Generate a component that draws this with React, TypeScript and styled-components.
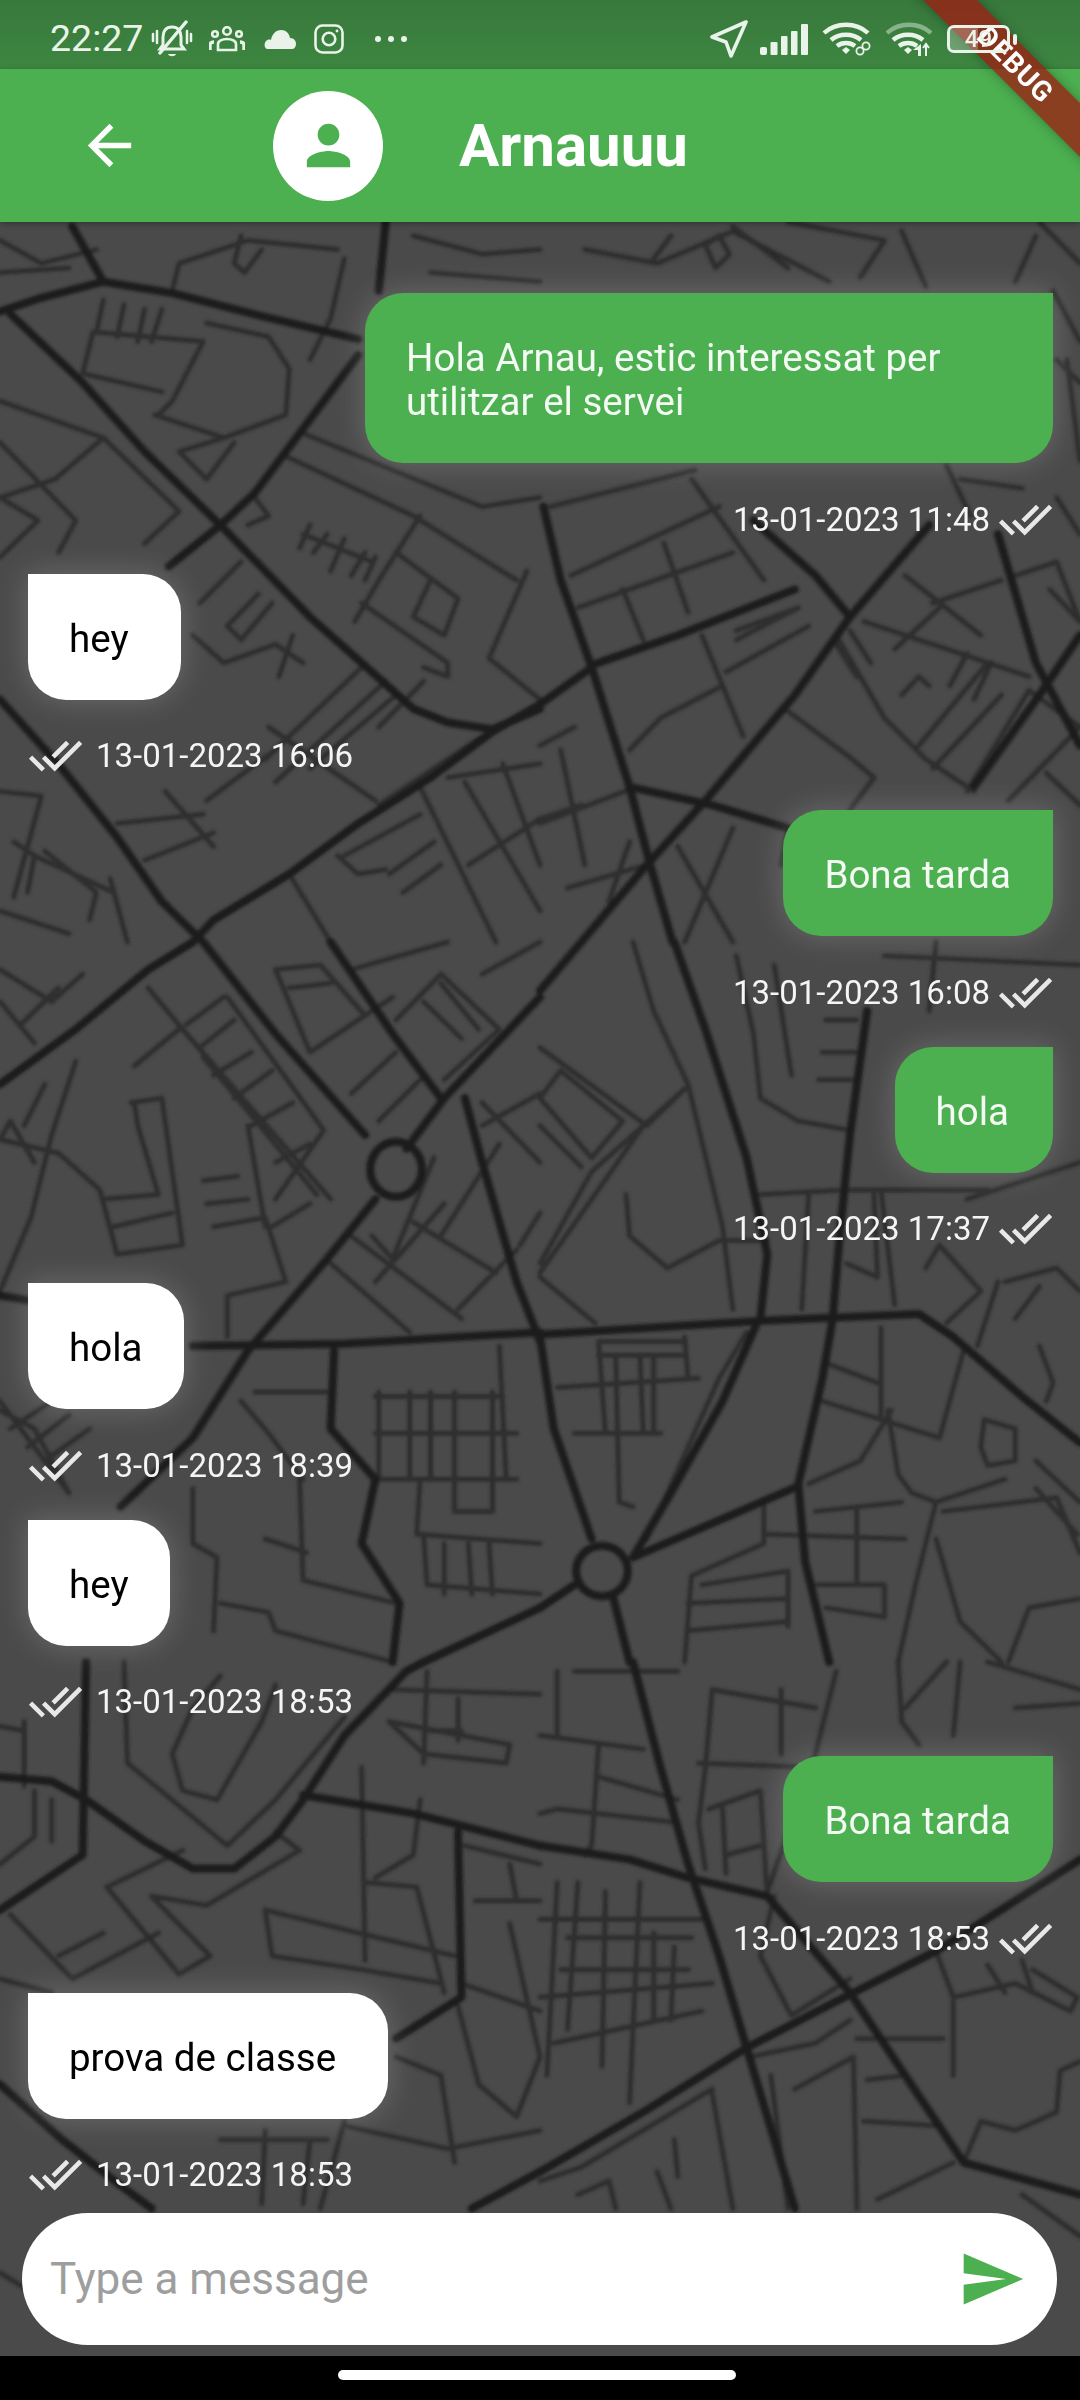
import React from 'react';
import styled, { createGlobalStyle } from 'styled-components';

const GlobalStyle = createGlobalStyle`
  html, body {
    margin: 0;
    padding: 0;
    background: #000;
  }
  * {
    box-sizing: border-box;
  }
`;

const Screen = styled.div`
  position: relative;
  width: 1080px;
  height: 2400px;
  display: flex;
  flex-direction: column;
  overflow: hidden;
  font-family: Roboto, 'Liberation Sans', sans-serif;
`;

const StatusBar = styled.div`
  height: 69px;
  flex: none;
  display: flex;
  align-items: center;
  justify-content: space-between;
  padding: 9px 63px 0 50px;
  background: linear-gradient(180deg, #38783c 0%, #3d8641 100%);
  color: #e9f3e9;
`;

const StatusGroup = styled.div`
  display: flex;
  align-items: center;
`;

const StatusTime = styled.span`
  font-size: 37.5px;
  line-height: 1;
`;

const StatusSlot = styled.span<{ $gap: number }>`
  display: flex;
  margin-left: ${p => p.$gap}px;
`;

const Battery = styled.div`
  position: relative;
  z-index: 3;
  width: 63px;
  height: 28px;
  margin-left: 15px;
  border: 3.5px solid #e9f3e9;
  border-radius: 7px;
  display: flex;
  align-items: center;
  justify-content: center;
  overflow: hidden;
`;

const BatteryFill = styled.div`
  position: absolute;
  left: 0;
  top: 0;
  bottom: 0;
  width: 49%;
  background: rgba(255, 255, 255, 0.25);
`;

const BatteryText = styled.span`
  position: relative;
  font-size: 24px;
  font-weight: 500;
  line-height: 1;
`;

const BatteryNub = styled.div`
  position: relative;
  z-index: 3;
  width: 4px;
  height: 11px;
  margin-left: 3px;
  border-radius: 2px;
  background: #e9f3e9;
`;

const DebugBanner = styled.div`
  position: absolute;
  z-index: 2;
  left: 865px;
  top: 46px;
  width: 300px;
  height: 38px;
  background: rgba(160, 25, 18, 0.75);
  box-shadow: 0 0 12px rgba(0, 0, 0, 0.3);
  transform: rotate(45deg);
  color: #fff;
  font-size: 28px;
  font-weight: 700;
  line-height: 38px;
  text-align: center;
  letter-spacing: 1px;
`;

const AppBar = styled.header`
  height: 153px;
  flex: none;
  display: flex;
  align-items: center;
  padding-left: 77px;
  background: #4caf50;
  box-shadow: 0 2px 6px rgba(0, 0, 0, 0.3);
  position: relative;
  z-index: 1;
`;

const Avatar = styled.div`
  width: 110px;
  height: 110px;
  margin-left: 131px;
  margin-right: 76px;
  border-radius: 50%;
  background: #fff;
  display: flex;
  align-items: center;
  justify-content: center;
`;

const Title = styled.h1`
  margin: 0;
  color: #fff;
  font-size: 60px;
  font-weight: 700;
  line-height: 1;
`;

const ChatArea = styled.main`
  position: relative;
  flex: 1;
  min-height: 0;
  display: flex;
  flex-direction: column;
  background: #4a4a4a;
`;

const MapLayer = styled.svg`
  position: absolute;
  inset: 0;
  width: 100%;
  height: 100%;
`;

const MessageList = styled.div`
  position: relative;
  flex: 1;
  min-height: 0;
  overflow: hidden;
  display: flex;
  flex-direction: column;
  padding: 71px 27px 0 28px;
`;

const Group = styled.div<{ $own: boolean }>`
  flex: none;
  display: flex;
  flex-direction: column;
  align-items: ${p => (p.$own ? 'flex-end' : 'flex-start')};
`;

const Bubble = styled.div<{ $own: boolean; $extra?: number }>`
  padding: 43px ${p => 41 + (p.$extra ?? 0)}px 39px 41px;
  max-width: 688px;
  font-size: 38.5px;
  line-height: 44px;
  color: ${p => (p.$own ? '#f4faf4' : '#000')};
  background: ${p => (p.$own ? '#4caf50' : '#fff')};
  border-radius: ${p => (p.$own ? '38px 0 38px 38px' : '0 38px 38px 38px')};
  box-shadow: 0 0 30px 2px rgba(255, 255, 255, 0.18);
`;

const Stamp = styled.div<{ $own: boolean }>`
  height: 110.5px;
  padding-top: 2px;
  display: flex;
  align-items: center;
  gap: ${p => (p.$own ? 8 : 13)}px;
  flex-direction: ${p => (p.$own ? 'row' : 'row-reverse')};
  color: #f5f5f5;
  font-size: 33px;
`;

const InputBar = styled.div`
  position: relative;
  flex: none;
  height: 132px;
  margin: 0 23px 11px 22px;
  padding: 0 31px 0 28px;
  border-radius: 66px;
  background: #fff;
  display: flex;
  align-items: center;
  justify-content: space-between;
`;

const Placeholder = styled.span`
  color: #9e9e9e;
  font-size: 44px;
`;

const NavBar = styled.div`
  height: 44px;
  flex: none;
  display: flex;
  justify-content: center;
  padding: 14px 6px 0 0;
  background: #000;
`;

const HomePill = styled.div`
  width: 398px;
  height: 10px;
  border-radius: 5px;
  background: #fff;
`;

const MapPath = styled.path<{ $major?: boolean }>`
  fill: none;
  stroke: ${p => (p.$major ? '#1c1c1c' : '#2d2d2d')};
  stroke-width: ${p => (p.$major ? 8 : 5)}px;
  stroke-linejoin: round;
  stroke-linecap: round;
  vector-effect: non-scaling-stroke;
`;

const MapEllipse = styled.ellipse`
  fill: none;
  stroke: #1c1c1c;
  stroke-width: 8px;
  vector-effect: non-scaling-stroke;
`;

type Tile = {
  x: number;
  y: number;
  major: string[];
  minor: string[];
  rings?: [number, number, number, number][];
};

const tiles: Tile[] = [
  {
    x: 0,
    y: 222,
    major: [
      'M0 195L120 165L300 130L500 155L760 205L1040 255',
      'M210 10L300 130',
      'M30 200L240 350L420 500L640 660L900 860L1080 980L1200 1060L1300 1090L1430 1105L1568 1060',
      'M1040 290L860 470L740 590L640 660L490 750',
      'M1568 1050L1430 1110L1250 1210L1040 1310L840 1420L620 1520L560 1568',
      'M0 1040L180 1190L340 1340L470 1480L590 1568',
      'M1120 0L1100 150',
    ],
    minor: [
      'M1000 80L960 210L900 300',
      'M980 60L720 40L520 90L500 150',
      'M700 30L680 90L710 110L760 60',
      'M300 170L280 240L590 260L500 390L460 420',
      'M270 240L240 330L470 370',
      'M360 180L340 250M420 190L400 260M470 190L440 260',
      'M600 220L780 250L840 320L830 420L650 470L450 420',
      'M0 390L300 470L160 560L0 600',
      'M0 480L220 650L170 720',
      'M300 470L520 630L420 700',
      'M0 600L110 650L0 730',
      'M650 470L520 500L600 560L680 480',
      'M830 510L1200 640L1500 780',
      'M880 460L1400 620L1568 600',
      'M740 600L780 640L720 660M880 680L1080 740M900 660L870 710M950 680L910 720M1000 690L960 760M1060 720L1020 770M1090 730L1060 780',
      'M1220 640L1100 780L1030 870',
      'M1150 720L1330 820L1290 900L1200 860L1250 780',
      'M1050 830L1300 960L1300 990L1230 970',
      'M1530 760L1420 950L1568 1040',
      'M700 740L580 830M750 810L660 880L700 910L790 830',
      'M560 900L650 960L800 920M800 920L880 960M850 900L810 990',
      'M1120 1000L800 1220M1050 970L770 1170M1150 1030L900 1190',
      'M1100 1100L1230 1000',
      'M1400 1120L1100 1270',
      'M780 1100L1090 1260',
      'M600 1260L780 1160',
      'M480 1240L620 1360M340 1310L590 1290M420 1390L620 1330',
      'M1220 1230L1440 1568M1300 1210L1568 1180',
      'M1000 1380L1220 1290M1130 1420L1260 1350M1170 1460L1280 1400M980 1380L1040 1420L1120 1410',
      'M840 1420L960 1568',
      'M1350 1220L1568 1500M1568 1300L1360 1400M1460 1180L1568 1400',
      'M0 1240L120 1250L40 1470M100 1380L330 1460M40 1350L100 1380L80 1460M320 1430L370 1568M0 1500L200 1550',
      'M130 1370L280 1460L260 1520',
      'M0 40L120 90L280 60M0 110L200 100',
      'M1200 30L1400 70L1568 60M1250 110L1568 130',
    ],
  },
  {
    x: 540,
    y: 222,
    major: [
      'M10 620L60 780L150 970L260 1230L320 1400L385 1568',
      'M1130 660L900 860L740 1030L480 1260L310 1400L120 1568L0 1674',
      'M620 650L800 770L900 860',
      'M150 965L400 900L740 800',
      'M1330 680L1440 960L1568 1140',
      'M1568 900L1450 1030L1260 1230',
      'M260 1230L500 1270L720 1320',
      'M0 1050L150 970',
    ],
    minor: [
      'M0 1140L100 1100',
      'M380 30L330 80M130 60L340 90L560 20L840 130',
      'M480 50L520 30L550 70L510 100Z',
      'M560 10L720 100M720 0L1000 40L930 120M1050 20L1120 140M1440 30L1380 130',
      'M30 620L450 540M90 770L520 620M110 840L560 720M240 800L300 910M360 700L430 850M440 560L650 780',
      'M470 900L590 1120M570 910L750 840L570 890M540 980L780 880',
      'M260 1150L350 1080L530 1010',
      'M710 1060L890 1160L970 1210L900 1280',
      'M860 900L1000 1080L1120 1170L1260 1240M940 870L1420 990',
      'M860 920L920 990M900 890L960 960',
      'M1060 770L1280 900M1140 830L1340 780M1030 930L1160 840',
      'M1050 1030L1100 990L1130 1010M1240 940L1190 1010M1310 960L1260 1040',
      'M1100 1140L1300 960M1140 1190L1340 1030M1240 1240L1420 1020M1420 1020L1568 1100',
      'M1500 600L1568 680M1380 770L1500 740L1568 870M1480 800L1568 870M1470 1200L1568 1270M1360 1260L1568 1100',
      'M0 1310L280 1230M60 1150L130 1400M120 1270L0 1300M200 1480L260 1350M80 1450L310 1400',
      'M720 1320L700 1400M400 1360L560 1568M560 1320L420 1568',
      'M1450 0L1568 90M1490 150L1568 260M1500 300L1568 350M1530 300L1568 520',
      'M1180 530L1250 640M1220 560L1400 580',
    ],
  },
  {
    x: 0,
    y: 942,
    major: [
      'M0 310L220 190L430 60L560 0',
      'M590 0L800 200L1060 420',
      'M960 0L1140 200L1280 340',
      'M1568 120L1290 340L1180 450',
      'M1090 560L950 690L720 890L560 1080L350 1230',
      'M1350 340L1400 480L1500 740L1568 870',
      'M560 880L1000 875L1568 850',
      'M970 890L960 1060L1090 1170L1050 1310L1160 1440L1140 1568',
      'M0 770L80 780',
      'M1568 1450L1230 1568',
    ],
    minor: [
      'M430 100L530 190L960 560M540 180L650 120',
      'M660 120L940 410L800 560M580 230L680 170M620 290L730 240M680 340L790 280M730 400L850 350M800 480L900 440M590 250L920 550',
      'M390 270L520 190',
      'M800 60L930 50L1060 160L900 240L800 60M840 100L960 90M900 240L1140 120M1020 330L1150 240M1100 390L1220 300',
      'M1150 170L1280 70L1450 190L1290 300M1230 130L1340 210M1280 90L1390 190M1020 60L1300 0M1400 70L1568 0',
      'M380 350L470 340L530 660L340 680L290 540L170 460L0 430M390 350L400 400L460 550L300 560M330 620L500 590',
      'M220 260L150 420L90 600L0 760',
      'M0 430L30 390L100 480M130 310L70 400',
      'M590 520L690 510M600 570L720 560M620 620L770 600L830 740L660 770L660 860M720 400L770 620M790 620L900 570',
      'M960 700L1190 850M1020 640L1340 820M1090 740L1290 570M1330 800L1500 670M1140 690L1080 640M1200 610L1440 720M1260 470L1140 690M1450 440L1280 640',
      'M1400 400L1568 330M1400 350L1568 480M1510 660L1568 590',
      'M740 980L950 980M1090 990L1460 990M1090 1070L1500 1070M1100 1170L1500 1170',
      'M1100 980L1100 1170M1190 980L1190 1170M1250 980L1250 1170M1320 980L1320 1240L1430 1240L1430 980M1450 880L1470 1170',
      'M1220 1170L1210 1290L1568 1310M1230 1290L1240 1400L1568 1420M1290 1310L1290 1420M1360 1310L1370 1420M1420 1310L1430 1420',
      'M770 1300L890 1330M870 1170L880 1390L1150 1440',
      'M560 1190L560 1310L630 1340L620 1500M640 1440L780 1460L800 1500L1000 1540L1140 1568',
      'M700 1000L780 1070L880 1170',
      'M0 1020L100 1060L200 1200L0 1000M80 1100L200 1030M130 1130L260 1060M30 1060L170 990',
      'M0 60L150 130L240 70M60 180L170 100M0 130L100 220',
    ],
    rings: [[1150, 495, 75, 60]],
  },
  {
    x: 540,
    y: 942,
    major: [
      'M390 0L480 190L600 470L660 680L640 820',
      'M950 150L900 420L870 640L850 820L820 950L750 1180L770 1350L840 1568',
      'M0 855L640 825L1100 810L1200 860L1400 990L1568 1090',
      'M0 860L40 1060L150 1300',
      'M630 830L530 1000L380 1200L270 1340',
      'M100 1400L0 1450M210 1420L260 1568',
      'M270 1340L750 1185',
    ],
    minor: [
      'M0 230L310 400L420 320L150 500L0 700M60 280L0 340L150 470L240 390L60 280M0 400L120 490M300 400L0 720',
      'M270 0L330 150L430 310L530 620L560 800',
      'M250 550L260 640L370 710L520 650L660 650M0 730L160 830',
      'M570 30L620 200L640 340L750 390L900 410M680 50L730 290',
      'M830 170L920 170M820 240L920 240M810 300L910 300',
      'M640 550L880 540L1060 540L1300 540M780 550L760 800M990 540L1030 790M890 700L980 730L970 550',
      'M1120 710L1160 660L1280 760L1180 830M1350 740L1500 710L1568 760M1380 820L1450 750M1330 740L1270 880M1450 880L1490 960L1470 1000',
      'M170 870L420 870M170 900L410 900M50 970L460 950M100 1070L350 1070M170 870L190 1070M220 900L230 1220L270 1230M290 900L300 1070M330 900L330 1070M420 860L430 950',
      'M310 1300L520 950L600 850',
      'M990 840L990 1030M840 920L980 960M820 1000L1160 1080L1230 890',
      'M1010 1020L1040 1160L1080 1200L1150 1220L1350 1170M1150 1220L1090 1400L1040 1568M1150 1300L1220 1480L1340 1568',
      'M1170 1240L1500 1210L1568 1330M1440 1190L1560 1290M1440 1130L1568 1220M1280 1100L1300 1140L1380 1130L1380 1060L1290 1040L1280 1100',
      'M1568 1430L1420 1450L1360 1568',
      'M780 1180L930 1130L1020 1020',
      'M650 1220L650 1310L440 1380L420 1568M660 1290L1060 1300M800 1240L1050 1220M920 1230L920 1390M790 1400L1000 1400L1000 1470L830 1450',
      'M430 1440L720 1430M430 1500L720 1480M720 1370L720 1490M470 1400L720 1370',
      'M1000 30L1568 50M1150 0L1130 150M1240 560L1568 480',
    ],
    rings: [[180, 1370, 75, 55]],
  },
  {
    x: 0,
    y: 1662,
    major: [
      'M0 250L150 260L250 300L420 390L560 450L680 450L800 380L880 300L1000 160L1180 20L1230 0',
      'M250 0L240 420L0 540',
      'M880 290L1200 330L1568 400',
      'M0 920L180 1040L350 1140L440 1190',
      'M1330 370L1340 730L1150 820',
      'M1568 1110L1370 1190',
    ],
    minor: [
      'M360 0L370 220L660 400L800 300L1000 120',
      'M560 100L500 200L530 280L630 300L760 130L800 50M560 100L640 30',
      'M70 130L70 270M0 140L70 150M100 280L100 380L0 440M150 300L150 390',
      'M310 490L530 410M310 490L520 680L610 640L440 510L600 530L870 410L800 370',
      'M30 550L210 690L460 590M0 690L150 720M170 640L300 590',
      'M770 540L1040 590L1320 640M770 540L790 640L1050 670L1280 700',
      'M1050 230L1060 650M1060 480L1210 490L1290 720M1090 470L1200 420L1220 300',
      'M1350 400L1568 440M1480 440L1500 520M1380 520L1568 520M1340 700L1568 760M1480 570L1568 860L1500 990L1390 920L1330 750',
      'M1130 130L1480 180L1470 220L1230 200L1130 130M1140 60L1568 70M1240 20L1230 220M1330 80L1330 170M1250 150L1340 150',
      'M1150 860L1280 900L1320 1090M1000 1010L1300 1060L1568 1020',
      'M640 1040L950 1040M770 1020L760 1180M900 1040L880 1180M1000 1000L930 1190',
      'M0 1330L150 1400L200 1480',
    ],
  },
  {
    x: 540,
    y: 1662,
    major: [
      'M270 0L350 230L430 440L520 640L600 840L680 1040L740 1190',
      'M0 1110L300 980L600 840L910 720L1150 630L1568 430',
      'M0 400L260 430L430 470L660 510L900 720L1060 900L1230 1090L1568 1160',
    ],
    minor: [
      'M0 1130L120 1100L500 930',
      'M170 180L150 400L130 420M0 330L50 320L400 350M170 250L400 300M50 20L50 160M0 160L300 190M100 20L400 20',
      'M500 60L480 230L460 350L480 450M500 60L800 100M460 220L800 230M700 60L700 200M860 20L800 200L660 500',
      'M490 320L640 280L660 510M540 420L640 400M530 320L540 460',
      'M0 560L480 560M0 730L500 700M50 480L20 900M110 480L80 800M190 500L180 880M290 480L260 960M80 600L440 600M60 670L430 670M40 830L470 760M390 620L380 780M330 590L330 780',
      'M640 640L730 770L900 690M680 510L640 640',
      'M610 860L800 830L900 780M740 930L910 860L920 1190M940 1000L1160 1010M920 820L1170 820M950 910L1060 900M980 1170L1200 1090M670 900L720 1190',
      'M390 1040L400 1120M500 940L560 1190M110 1160L200 1130L220 1190M340 1110L380 1190',
      'M1200 730L1150 630M1200 730L1380 700L1540 760L1560 730L1430 670M1300 660L1350 720M1400 650L1430 720',
      'M1510 890L1500 980L1380 1020L1280 1000L1230 1090M1200 740L1200 900M1568 870L1510 890',
      'M1040 0L1050 130L1100 180M1060 100L1180 0M1220 0L1200 160M1380 100L1568 90M1300 0L1568 60M1400 1160L1568 1250',
    ],
  },
];

// the zoomed crops were 540x720 shown at 1568x1568
const CityMap = () => (
  <MapLayer viewBox="0 222 1080 2134" preserveAspectRatio="none">
    <defs>
      <filter id="soft" x="0" y="0" width="100%" height="100%">
        <feGaussianBlur stdDeviation="1.6" />
      </filter>
    </defs>
    <g filter="url(#soft)">
      {tiles.map(tile => (
        <g key={`${tile.x}-${tile.y}`} transform={`translate(${tile.x} ${tile.y}) scale(${540 / 1568} ${720 / 1568})`}>
          {tile.minor.map((d, i) => <MapPath key={i} d={d} />)}
          {tile.major.map((d, i) => <MapPath key={i} d={d} $major />)}
          {tile.rings?.map(([cx, cy, rx, ry]) => <MapEllipse key={cx} cx={cx} cy={cy} rx={rx} ry={ry} />)}
        </g>
      ))}
    </g>
  </MapLayer>
);

const ACCENT = '#e9f3e9';

const MutedBell = () => (
  <svg width="44" height="38" viewBox="0 0 42 38" fill="none" stroke={ACCENT} strokeWidth="3" strokeLinecap="round">
    <path d="M21 7c-6 0-9 4-9 10v8l-3 4h24l-3-4v-8c0-6-3-10-9-10z" />
    <path d="M17 34h8c-1 3-7 3-8 0z" fill={ACCENT} stroke="none" />
    <path d="M35 2L9 33" strokeWidth="3.5" />
    <path d="M2 14v7M6 11v12M36 11v12M40 14v7" strokeWidth="2.5" />
  </svg>
);

const People = () => (
  <svg width="36" height="26" viewBox="0 0 36 26" fill="none" stroke={ACCENT} strokeWidth="2.6">
    <circle cx="18" cy="5" r="3.8" />
    <circle cx="6" cy="8" r="2.8" />
    <circle cx="30" cy="8" r="2.8" />
    <path d="M9 24v-6c0-3 4-5 9-5s9 2 9 5v6z" />
    <path d="M1 24v-5c0-2 2-3 4-3M35 24v-5c0-2-2-3-4-3" strokeWidth="3.4" />
  </svg>
);

const Cloud = () => (
  <svg width="32" height="20" viewBox="0 0 32 20">
    <path d="M3 20C0 19 0 14 2 12c1-1 3-2 5-1C8 5 12 1 17 1c5 0 8 3 9 8 4 0 6 3 6 6 0 3-2 5-4 5z" fill={ACCENT} />
  </svg>
);

const Instagram = () => (
  <svg width="30" height="30" viewBox="0 0 30 30" fill="none" stroke={ACCENT} strokeWidth="2.6">
    <rect x="1.5" y="1.5" width="27" height="27" rx="7" />
    <circle cx="15" cy="15" r="6.3" />
    <circle cx="23" cy="7" r="1.4" fill={ACCENT} stroke="none" />
  </svg>
);

const Dots = () => (
  <svg width="34" height="8" viewBox="0 0 34 8" fill={ACCENT}>
    <circle cx="4" cy="4" r="3" />
    <circle cx="17" cy="4" r="3" />
    <circle cx="30" cy="4" r="3" />
  </svg>
);

const LocationArrow = () => (
  <svg width="38" height="38" viewBox="0 0 38 38" fill="none" stroke={ACCENT} strokeWidth="3.6" strokeLinejoin="round">
    <path d="M36 2L2 17l14 5 5 14z" />
  </svg>
);

const Signal = () => (
  <svg width="48" height="31" viewBox="0 0 48 31" fill={ACCENT}>
    <rect x="0" y="23" width="7" height="8" rx="2" />
    <rect x="10.5" y="18" width="7" height="13" rx="1" />
    <rect x="21" y="12" width="6.5" height="19" rx="1" />
    <rect x="31" y="7" width="6.5" height="24" rx="1" />
    <rect x="41" y="0" width="7" height="31" rx="1" />
  </svg>
);

const WifiLink = () => (
  <svg width="50" height="34" viewBox="0 0 50 34" fill="none" stroke={ACCENT} strokeWidth="4.4">
    <path d="M2 11c12-11 32-11 44 0" />
    <path d="M9 18c8-7 22-7 30 0" />
    <path d="M15 24c5-4 13-4 18 0" />
    <path d="M20 28l4-3 4 3-4 4z" fill={ACCENT} stroke="none" />
    <circle cx="38" cy="29" r="3.6" strokeWidth="1.8" />
    <circle cx="44" cy="24" r="3.6" strokeWidth="1.8" />
  </svg>
);

const WifiData = () => (
  <svg width="46" height="34" viewBox="0 0 46 34" fill="none" stroke={ACCENT} strokeWidth="4.4">
    <path d="M1 11c12-11 32-11 44 0" opacity="0.45" />
    <path d="M7 18c8-7 22-7 30 0" />
    <path d="M13 24c5-4 13-4 18 0" />
    <path d="M18 28l4-3 4 3-4 4z" fill={ACCENT} stroke="none" />
    <path d="M33 34v-7h-3l4-3v10zM40 22v12M37 26l3-4 3 4" strokeWidth="2" />
  </svg>
);

const PersonIcon = () => (
  <svg width="65" height="65" viewBox="0 0 24 24" fill="#4caf50">
    <path d="M12 12c2.21 0 4-1.79 4-4s-1.79-4-4-4-4 1.79-4 4 1.79 4 4 4zm0 2c-2.67 0-8 1.34-8 4v2h16v-2c0-2.66-5.33-4-8-4z" />
  </svg>
);

const BackIcon = () => (
  <svg width="65" height="65" viewBox="0 0 24 24" fill="#fff">
    <path d="M20 11H7.83l5.59-5.59L12 4l-8 8 8 8 1.41-1.41L7.83 13H20v-2z" />
  </svg>
);

const DoneAll = () => (
  <svg width="55" height="55" viewBox="0 0 24 24" fill="#e8e8e8">
    <path d="M18 7l-1.41-1.41-6.34 6.34 1.41 1.41L18 7zm4.24-1.41L11.66 16.17 7.48 12l-1.41 1.41L11.66 19l12-12-1.42-1.41zM.41 13.41L6 19l1.41-1.41L1.83 12 .41 13.41z" />
  </svg>
);

const SendIcon = () => (
  <svg width="68" height="68" viewBox="0 0 24 24" fill="#4caf50">
    <path d="M2.01 21L23 12 2.01 3 2 10l15 2-15 2z" />
  </svg>
);

const messages = [
  { own: true, text: 'Hola Arnau, estic interessat per utilitzar el servei', time: '13-01-2023 11:48' },
  { own: false, text: 'hey', time: '13-01-2023 16:06', extra: 11 },
  { own: true, text: 'Bona tarda', time: '13-01-2023 16:08', extra: 1 },
  { own: true, text: 'hola', time: '13-01-2023 17:37', extra: 3 },
  { own: false, text: 'hola', time: '13-01-2023 18:39', extra: 1 },
  { own: false, text: 'hey', time: '13-01-2023 18:53' },
  { own: true, text: 'Bona tarda', time: '13-01-2023 18:53', extra: 1 },
  { own: false, text: 'prova de classe', time: '13-01-2023 18:53', extra: 11 },
];

const App: React.FC = () => (
  <Screen>
    <GlobalStyle />
    <StatusBar>
      <StatusGroup>
        <StatusTime>22:27</StatusTime>
        <StatusSlot $gap={7}><MutedBell /></StatusSlot>
        <StatusSlot $gap={15}><People /></StatusSlot>
        <StatusSlot $gap={19}><Cloud /></StatusSlot>
        <StatusSlot $gap={18}><Instagram /></StatusSlot>
        <StatusSlot $gap={30}><Dots /></StatusSlot>
      </StatusGroup>
      <StatusGroup>
        <StatusSlot $gap={0}><LocationArrow /></StatusSlot>
        <StatusSlot $gap={12}><Signal /></StatusSlot>
        <StatusSlot $gap={14}><WifiLink /></StatusSlot>
        <StatusSlot $gap={14}><WifiData /></StatusSlot>
        <Battery>
          <BatteryFill />
          <BatteryText>49</BatteryText>
        </Battery>
        <BatteryNub />
      </StatusGroup>
    </StatusBar>

    <AppBar>
      <BackIcon />
      <Avatar><PersonIcon /></Avatar>
      <Title>Arnauuu</Title>
    </AppBar>

    <ChatArea>
      <CityMap />
      <MessageList>
        {messages.map((m, i) => (
          <Group key={i} $own={m.own}>
            <Bubble $own={m.own} $extra={m.extra}>{m.text}</Bubble>
            <Stamp $own={m.own}>
              <span>{m.time}</span>
              <DoneAll />
            </Stamp>
          </Group>
        ))}
      </MessageList>
      <InputBar>
        <Placeholder>Type a message</Placeholder>
        <SendIcon />
      </InputBar>
    </ChatArea>

    <NavBar>
      <HomePill />
    </NavBar>

    <DebugBanner>DEBUG</DebugBanner>
  </Screen>
);

export default App;
